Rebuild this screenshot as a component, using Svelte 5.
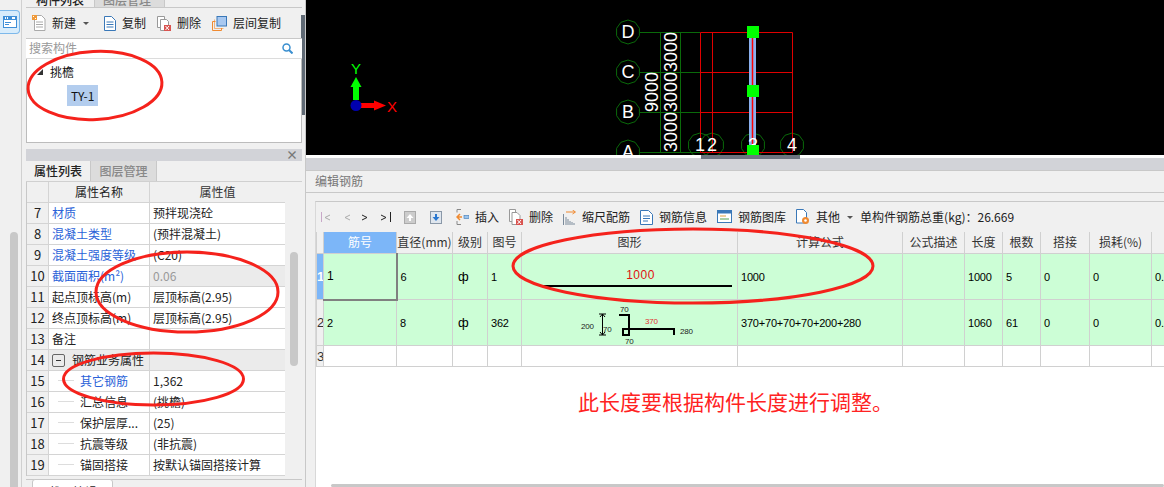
<script>
  const props = [
    { n: 7, name: '材质', val: '预拌现浇砼', link: true },
    { n: 8, name: '混凝土类型', val: '(预拌混凝土)', link: true },
    { n: 9, name: '混凝土强度等级', val: '(C20)', link: true },
    { n: 10, name: '截面面积(m²)', val: '0.06', link: true, off: true },
    { n: 11, name: '起点顶标高(m)', val: '层顶标高(2.95)' },
    { n: 12, name: '终点顶标高(m)', val: '层顶标高(2.95)' },
    { n: 13, name: '备注', val: '' },
    { n: 14, name: '钢筋业务属性', val: '', group: true },
    { n: 15, name: '其它钢筋', val: '1,362', link: true, child: true },
    { n: 16, name: '汇总信息', val: '(挑檐)', child: true },
    { n: 17, name: '保护层厚...', val: '(25)', child: true },
    { n: 18, name: '抗震等级', val: '(非抗震)', child: true },
    { n: 19, name: '锚固搭接', val: '按默认锚固搭接计算', child: true }
  ];
  const heads = ['筋号', '直径(mm)', '级别', '图号', '图形', '计算公式', '公式描述', '长度', '根数', '搭接', '损耗(%)', '单'];
  const widths = [7, 73, 56, 35, 34, 216, 165, 62, 38, 38, 49, 62, 40];
  const grids = [[628, 32, 'D'], [628, 72, 'C'], [628, 112, 'B'], [628, 152, 'A']];
  const axes = [[700, '1'], [712, '2'], [753, '3'], [792, '4']];
  const octagon = (x, y, r = 12) => Array.from({ length: 10 }, (_, i) => {
    const a = (i * Math.PI) / 5 + Math.PI / 10;
    return `${(x + r * Math.cos(a)).toFixed(1)},${(y + r * Math.sin(a)).toFixed(1)}`;
  }).join(' ');
</script>

<div class="app">
  <aside class="rail">
    <div class="rail-btn">
      <svg width="14" height="12" viewBox="0 0 14 12"><rect width="14" height="12" fill="#3f8fd8"/><rect x="1" y="4" width="12" height="7" fill="#fff"/><rect x="2" y="1" width="1" height="2" fill="#fff"/><rect x="4" y="1" width="1" height="2" fill="#fff"/><rect x="9" y="1" width="3" height="2" fill="#fff"/><rect x="2" y="6" width="6" height="1" fill="#3f8fd8"/><rect x="2" y="8" width="4" height="1" fill="#3f8fd8"/></svg>
    </div>
    <div class="rail-thumb"></div>
  </aside>

  <section class="side">
    <div class="cut-tabs">
      <span class="cut-tab on">构件列表</span>
      <span class="cut-tab">图层管理</span>
    </div>
    <div class="side-tools">
      <span class="tool t-new">
        <svg width="14" height="16" viewBox="0 0 14 16"><path d="M2.5.5h7l3.5 3.5v11.5h-10.500z" fill="#fff" stroke="#aaa"/><path d="M4 7h7M4 9.500h7M4 12h7" stroke="#aaa"/><rect width="5" height="5" fill="#f09a3a"/><path d="M1 1h1v1H1zM3 3h1v1H3z" fill="#fff"/></svg>
        新建<i class="caret"></i>
      </span>
      <span class="tool">
        <svg width="12" height="15" viewBox="0 0 12 15"><path d="M.5.500h7l4 4v10h-11z" fill="#fff" stroke="#3a78b8"/><path d="M2.500 6h7M2.500 8.500h7M2.500 11h7" stroke="#3a78b8"/></svg>
        复制
      </span>
      <span class="tool">
        <svg width="14" height="15" viewBox="0 0 14 15"><path d="M.5.500h7v11h-7z" fill="#fff" stroke="#999"/><path d="M3.500 3.500h6l2 2v9h-8z" fill="#fff" stroke="#999"/><rect x="7" y="9" width="7" height="6" fill="#d9534f"/><path d="M8.500 10l3.500 4M12 10l-3.500 4" stroke="#fff"/></svg>
        删除
      </span>
      <span class="tool">
        <svg width="15" height="15" viewBox="0 0 15 15"><path d="M3.500 5.500h-3v9h9v-2.500" fill="none" stroke="#f08a30"/><path d="M2.500 3.500v9h9" fill="none" stroke="#f08a30" opacity=".6"/><rect x="5" y=".5" width="9.500" height="9.500" fill="#a8c8f0" stroke="#3a78b8"/></svg>
        层间复制
      </span>
      <span class="more">
        <svg width="8" height="7" viewBox="0 0 8 7"><path d="M0 0l3.500 3.500L0 7zM4.500 0L8 3.500 4.500 7z" fill="#333"/></svg>
      </span>
    </div>
    <div class="search">
      <span>搜索构件</span>
      <svg width="11" height="11" viewBox="0 0 11 11"><circle cx="4.500" cy="4.500" r="3.500" fill="none" stroke="#3a8fd0" stroke-width="1.500"/><path d="M7 7l3.500 3.500" stroke="#3a8fd0" stroke-width="2"/></svg>
    </div>
    <div class="tree">
      <div class="tree-root"><i class="tri"></i>挑檐</div>
      <div class="tree-leaf"><span>TY-1</span></div>
    </div>

    <div class="pane-bar"><span class="close">×</span></div>
    <div class="tabs">
      <span class="tab on">属性列表</span>
      <span class="tab">图层管理</span>
    </div>
    <div class="props">
      <div class="props-head">
        <span class="c-num"></span><span class="c-name">属性名称</span><span class="c-val">属性值</span>
      </div>
      {#each props as p}
        <div class="prop" class:group={p.group} class:off={p.off}>
          <span class="c-num">{p.n}</span>
          <span class="c-name" class:link={p.link} class:child={p.child}>
            {#if p.group}<i class="minus"></i>{/if}
            {#if p.child}<i class="branch"></i>{/if}
            {p.name}
          </span>
          <span class="c-val">{p.val}</span>
        </div>
      {/each}
    </div>
    <div class="bottom-tabs"><span class="bottom-tab">截面编辑</span></div>
    <div class="props-thumb"></div>
  </section>

  <div class="splitter"></div>

  <main class="main">
    <div class="canvas">
      <svg class="cad" width="858" height="155" viewBox="306 0 858 155">
        <path d="M356 100V85" stroke="#0f0" stroke-width="6"/>
        <path d="M350.500 87L356 77l5.500 10z" fill="#0f0"/>
        <path d="M356 105.500h18" stroke="#f00" stroke-width="5"/>
        <path d="M374 100.500l12 5-12 5z" fill="#f00"/>
        <circle cx="356" cy="105.500" r="5.500" fill="#0000b0"/>
        <text x="356" y="74" class="axis" fill="#0f0">Y</text>
        <text x="392" y="112" class="axis" fill="#f00">X</text>

        <g fill="none" stroke="#0a6a0a">
          <path d="M640 32.500h60M640 72.500h60M640 112.500h60M640 152.500h60M660.500 32v121M680.500 32v121"/>
          {#each grids as g}<polygon points={octagon(g[0], g[1])}/>{/each}
          {#each axes as a}<polygon points={octagon(a[0], 145)}/>{/each}
        </g>
        <path d="M700.500 32.500h92v120h-92zM712.500 32v120M700 72.500h92M700 112.500h92" fill="none" stroke="#e00000"/>
        <rect x="749" y="32" width="7" height="118" fill="#8ab0ee"/>
        <path d="M752.500 32v118" stroke="#f00" stroke-width="1.500"/>

        <g class="labels" fill="#fff">
          {#each grids as g}<text x={g[0]} y={g[1] + 6}>{g[2]}</text>{/each}
          {#each axes as a}<text x={a[0]} y="151">{a[1]}</text>{/each}
        </g>
        <g class="dims" fill="#fff">
          <text transform="translate(677 72) rotate(-90)" textLength="40" lengthAdjust="spacingAndGlyphs">3000</text>
          <text transform="translate(677 112) rotate(-90)" textLength="40" lengthAdjust="spacingAndGlyphs">3000</text>
          <text transform="translate(677 152) rotate(-90)" textLength="40" lengthAdjust="spacingAndGlyphs">3000</text>
          <text transform="translate(658 112) rotate(-90)" textLength="40" lengthAdjust="spacingAndGlyphs">9000</text>
        </g>
        <g fill="#0f0">
          <rect x="747" y="26" width="12" height="12"/>
          <rect x="747" y="85" width="12" height="12"/>
          <rect x="747" y="145" width="12" height="11"/>
        </g>
      </svg>
    </div>
    <div class="canvas-foot"><span class="hscroll"></span></div>
    <div class="pane-bar wide"></div>
    <div class="title">编辑钢筋</div>
    <div class="editor">
      <div class="edit-tools">
        <span class="nav">
          <svg width="70" height="10" viewBox="0 0 70 10" class="nav-svg">
            <path d="M.5 0v10" stroke="#c8a8c8"/><path d="M9 3L4 5.500 9 8M29 3l-5 2.500 5 2.500" fill="none" stroke="#aaa"/>
            <path d="M41 3l5 2.500-5 2.500M60 3l5 2.500-5 2.500" fill="none" stroke="#222"/><path d="M69.500 0v10" stroke="#222"/>
          </svg>
        </span>
        <svg class="ico-up" width="12" height="13" viewBox="0 0 12 13"><rect x=".5" y=".5" width="11" height="12" fill="#ccc" stroke="#aaa"/><path d="M6 3L2.500 7H5v3h2V7h2.500z" fill="#fff"/></svg>
        <svg class="ico-down" width="12" height="13" viewBox="0 0 12 13"><rect x=".5" y=".5" width="11" height="12" fill="#dfe6ee" stroke="#8a98a8"/><path d="M6 10l3.500-4H7V3H5v3H2.500z" fill="#2a78d0"/></svg>
        <span class="tool i-ins">
          <svg width="13" height="16" viewBox="0 0 13 16"><path d="M5 .5H1v3M1 12v3.500h4" fill="none" stroke="#888"/><path d="M6 8H1.500M4 5L1 8l3 3" fill="none" stroke="#f08a30" stroke-width="1.500"/><rect x="8" y="6.500" width="5" height="3" fill="#9cc4ec" stroke="#3a78b8" stroke-width=".6"/></svg>
          插入
        </span>
        <span class="tool">
          <svg width="14" height="16" viewBox="0 0 14 16"><path d="M.5.500h6v12h-6z" fill="#fff" stroke="#999"/><path d="M3 3.500h5l3 3v9H3z" fill="#fff" stroke="#999"/><rect x="7" y="10" width="7" height="6" fill="#d9534f"/><path d="M8.500 11l3.500 4M12 11l-3.500 4" stroke="#fff"/></svg>
          删除
        </span>
        <span class="tool">
          <svg width="13" height="15" viewBox="0 0 13 15"><path d="M.5 4v11M3 7v8M5 9v6M7 11v4M9 12v3M11 13v2" stroke="#7a8a9a"/><path d="M3 2h9M9.500 0l3 2-3 2" fill="none" stroke="#f08a30"/></svg>
          缩尺配筋
        </span>
        <span class="tool">
          <svg width="13" height="15" viewBox="0 0 13 15"><path d="M.5.500h8l4 4v10H.5z" fill="#fff" stroke="#3a78b8"/><path d="M3 6h7M3 8.500h7M3 11h5" stroke="#3a78b8"/></svg>
          钢筋信息
        </span>
        <span class="tool">
          <svg width="15" height="13" viewBox="0 0 15 13"><rect x=".5" y=".5" width="14" height="12" fill="#fff" stroke="#3a78b8"/><rect x="1" y="1" width="13" height="2.500" fill="#3a78b8"/><path d="M3 6h6" stroke="#e0a040"/><path d="M3 9h9" stroke="#50a050"/></svg>
          钢筋图库
        </span>
        <span class="tool">
          <svg width="14" height="16" viewBox="0 0 14 16"><path d="M.5.500h7l3 3V14H.5z" fill="#fff" stroke="#3a78b8"/><circle cx="9.500" cy="11.500" r="3.500" fill="#f08a30"/><circle cx="9.500" cy="11.500" r="1.300" fill="#fff"/></svg>
          其他<i class="caret"></i>
        </span>
        <span class="total">单构件钢筋总重(kg)：26.669</span>
      </div>

      <table class="bars">
        <colgroup>{#each widths as w}<col style="width: {w}px" />{/each}</colgroup>
        <thead>
          <tr>
            <th></th>
            {#each heads as h, i}<th class:active={i === 0}>{h}</th>{/each}
          </tr>
        </thead>
        <tbody>
          <tr class="green">
            <td class="rowno cur">1</td>
            <td class="selected">1</td><td>6</td><td class="grade">ф</td><td>1</td>
            <td class="shape">
              <div class="len-label">1000</div>
              <div class="len-line"></div>
            </td>
            <td>1000</td><td></td><td>1000</td><td>5</td><td>0</td><td>0</td><td>0.</td>
          </tr>
          <tr class="green">
            <td class="rowno">2</td>
            <td>2</td><td>8</td><td class="grade">ф</td><td>362</td>
            <td class="shape">
              <svg class="fig" width="215" height="45" viewBox="521 300 215 45">
                <path d="M601.500 314v21M598 314h7M598 335h7M599 317l2.500-3 2.500 3M599 332l2.500 3 2.500-3" fill="none" stroke="#000"/>
                <path d="M618 315h10v20h-6v-6h51v6" fill="none" stroke="#000" stroke-width="2"/>
                <text x="580" y="329">200</text><text x="602" y="332">70</text>
                <text x="619" y="312">70</text><text x="644" y="324" fill="#e03030">370</text>
                <text x="679" y="334">280</text><text x="624" y="344">70</text>
              </svg>
            </td>
            <td>370+70+70+70+200+280</td><td></td><td>1060</td><td>61</td><td>0</td><td>0</td><td>0.</td>
          </tr>
          <tr class="blank">
            <td class="rowno">3</td>
            <td></td><td></td><td></td><td></td><td></td><td></td><td></td><td></td><td></td><td></td><td></td><td></td>
          </tr>
        </tbody>
      </table>

      <p class="note">此长度要根据构件长度进行调整。</p>
    </div>
    <div class="bottom-scroll"></div>
  </main>

  <svg class="marks" width="1164" height="487" viewBox="0 0 1164 487">
    <g fill="none" stroke="#f5221c" stroke-width="3">
      <ellipse cx="95" cy="85.500" rx="67" ry="34" transform="rotate(-3 95 85.500)"/>
      <ellipse cx="187" cy="292" rx="91" ry="40"/>
      <ellipse cx="153.500" cy="379" rx="90" ry="26"/>
      <ellipse cx="693" cy="266" rx="180" ry="37"/>
    </g>
  </svg>
</div>

<style>
  :global(body) { margin: 0; background: #f0f0f0; }
  .app {
    position: relative;
    display: flex;
    width: 1164px;
    height: 487px;
    overflow: hidden;
    font: 12px/1.2 "Noto Sans CJK SC", "Liberation Sans", sans-serif;
    color: #222;
    background: #f0f0f0;
  }

  .rail {
    position: relative;
    flex: 0 0 22px;
    width: 22px;
    border-right: 1px solid #d0d0d0;
    box-sizing: border-box;
  }
  .rail-btn {
    display: flex;
    align-items: center;
    justify-content: center;
    width: 20px;
    height: 24px;
    margin-top: 10px;
    background: #d8ecfb;
    border: 1px solid #7db8ea;
    border-left: 0;
    border-radius: 0 4px 4px 0;
    box-sizing: border-box;
  }
  .rail-thumb {
    position: absolute;
    left: 10px;
    top: 232px;
    bottom: 0;
    width: 8px;
    border-radius: 4px 4px 0 0;
    background: #c8c8c8;
  }

  .side {
    position: relative;
    flex: 0 0 276px;
    min-width: 0;
    margin-left: 4px;
    display: flex;
    flex-direction: column;
  }
  .side > * { flex: none; }
  .cut-tabs { display: flex; height: 8px; overflow: hidden; border-bottom: 1px solid #c8c8c8; box-sizing: border-box; }
  .cut-tab { height: 7px; padding: 0 10px; line-height: 0; font-weight: 500; border-right: 1px solid #c8c8c8; width: 48px; }
  .cut-tab:not(.on) { background: #dcdcdc; color: #888; width: 55px; padding: 0 6px 0 8px; }
  .cut-tab.on { background: #f0f0f0; }

  .side-tools { display: flex; align-items: center; height: 30px; padding-left: 6px; border-bottom: 1px solid #c8c8c8; }
  .tool { display: inline-flex; align-items: center; gap: 6px; white-space: nowrap; }
  .side-tools .tool { margin-right: 11px; }
  .side-tools .t-new { margin-right: 15px; }
  .more { margin-left: 14px; display: flex; }
  .caret { display: inline-block; margin-left: 1px; border: 3px solid transparent; border-top: 3px solid #555; border-bottom: 0; }

  .search {
    display: flex;
    align-items: center;
    justify-content: space-between;
    height: 19px;
    padding: 0 9px 0 3px;
    background: #fff;
    color: #999;
    border-bottom: 1px solid #dcdcdc;
  }
  .tree {
    height: 84px;
    background: #fff;
    border: 1px solid #bcbcbc;
    border-top: 0;
    box-sizing: border-box;
    padding-top: 4px;
    color: #111;
  }
  .tree-root { display: flex; align-items: center; height: 18px; padding-left: 10px; }
  .tri { width: 0; height: 0; margin-right: 7px; border-left: 6px solid transparent; border-bottom: 6px solid #333; }
  .tree-leaf { margin: 4px 0 0 40px; }
  .tree-leaf span { display: inline-block; height: 21px; line-height: 21px; padding: 0 4px; background: #b3cdee; }

  .pane-bar { height: 12px; margin-top: 6px; background: #d2d3d8; display: flex; justify-content: flex-end; align-items: center; }
  .close { color: #777; font-size: 12px; line-height: 12px; padding-right: 4px; font-weight: 700; }
  .tabs { display: flex; height: 21px; border-bottom: 1px solid #d0d0d0; box-sizing: border-box; }
  .tab { width: 64px; display: flex; align-items: center; justify-content: center; font-weight: 500; border-right: 1px solid #c8c8c8; }
  .tab:not(.on) { background: #dcdcdc; color: #888; width: 65px; }

  .props { width: 259px; background: #fff; border-left: 1px solid #c8c8c8; box-sizing: border-box; }
  .props-head, .prop { display: flex; height: 21px; line-height: 20px; box-sizing: border-box; border-bottom: 1px solid #d4d4d4; }
  .props-head { background: #f0f0f0; text-align: center; }
  .props-head .c-val { padding: 0; color: #333; }
  .props-head .c-name { justify-content: center; padding: 0; }
  .c-num { flex: 0 0 21px; text-align: center; background: #f0f0f0; border-right: 1px solid #d4d4d4; font-size: 13px; }
  .c-name {
    flex: 0 0 101px;
    display: flex;
    align-items: center;
    padding-left: 3px;
    box-sizing: border-box;
    border-right: 1px solid #d4d4d4;
    white-space: nowrap;
  }
  .c-val { flex: 1; padding-left: 3px; white-space: nowrap; }
  .link { color: #2a62d8; }
  .child { padding-left: 31px; position: relative; }
  .branch { position: absolute; left: 9px; top: 9px; width: 16px; border-top: 1px solid #ddd; }
  .minus { width: 11px; height: 11px; margin-right: 7px; border: 1px solid #666; border-radius: 2px; position: relative; flex: none; }
  .minus::after { content: ""; position: absolute; left: 3px; top: 5px; width: 5px; border-top: 1px solid #333; }
  .group .c-name, .group .c-val { background: #ebebeb; }
  .off .c-val { background: #ebebeb; color: #999; }
  .props-thumb { position: absolute; left: 264px; top: 252px; width: 8px; height: 114px; border-radius: 4px; background: #c8c8c8; }

  .bottom-tabs { margin-top: 3px; padding-left: 6px; border-top: 1px solid #c8c8c8; }
  .bottom-tab { display: block; width: 79px; height: 12px; margin-top: -1px; padding-top: 5px; text-align: center; background: #fff; border: 1px solid #c8c8c8; border-radius: 3px 3px 0 0; }

  .splitter { flex: 0 0 4px; margin-left: -1px; background: linear-gradient(#f0f0f0 15px, #5f6974 15px, #5f6974 115px, #f0f0f0 115px); }

  .main { flex: 1; min-width: 0; display: flex; flex-direction: column; border-left: 1px solid #c8c8c8; position: relative; }
  .canvas { height: 155px; background: #000; flex: none; overflow: hidden; }
  .cad { display: block; }
  .axis { font: 15px "Liberation Sans", sans-serif; text-anchor: middle; }
  .labels { font: 18px "Liberation Sans", sans-serif; text-anchor: middle; }
  .dims { font: 18px "Liberation Sans", sans-serif; }
  .canvas-foot { height: 3px; flex: none; background: #fff; position: relative; }
  .hscroll { position: absolute; left: 395px; width: 99px; height: 4px; background: #6d7580; }
  .main .pane-bar { margin: 0; flex: none; }
  .title { height: 21px; line-height: 20px; padding-left: 9px; flex: none; color: #777; border-top: 1px solid #c8c8c8; border-bottom: 1px solid #c8c8c8; }

  .editor { flex: 1; margin: 8px 0 0 9px; background: #fff; border-top: 1px solid #c8c8c8; border-left: 1px solid #d8d8d8; }
  .edit-tools { display: flex; align-items: center; height: 30px; background: #f0f0f0; padding-left: 5px; }
  .nav { margin-right: 13px; display: flex; }
  .ico-up { margin-right: 14px; flex: none; }
  .ico-down { margin-right: 14px; flex: none; }
  .edit-tools .tool { margin-right: 10px; }
  .total { margin-left: -3px; white-space: nowrap; }

  .bars { border-collapse: collapse; table-layout: fixed; width: 848px; }
  .bars th { height: 21px; padding: 0; background: #f0f0f0; font-weight: 400; color: #333; border: 1px solid #d0d0d0; border-top: 0; white-space: nowrap; overflow: hidden; }
  .bars th.active { background: #7cb6f8; color: #fff; }
  .bars td { height: 46px; padding: 0 0 0 3px; border: 1px solid #d0d0d0; font: 11px "Liberation Sans", sans-serif; letter-spacing: -.2px; color: #000; box-sizing: border-box; overflow: hidden; white-space: nowrap; }
  .green td { background: #ccfed6; }
  .bars td.rowno { padding: 0; background: #f0f0f0; font: 13px "Liberation Sans", sans-serif; color: #333; }
  .bars td.cur { background: #7cb6f8; color: #fff; font-weight: 700; }
  .bars td.selected { border: 1px solid #d0d0d0; border-right: 2px solid #808080; border-bottom: 2px solid #808080; font-size: 12px; }
  .bars td.grade { padding-left: 5px; font-size: 13px; }
  .bars td.shape { padding: 0; }
  .len-label { text-align: center; color: #e01010; font-size: 12px; letter-spacing: .5px; height: 15px; margin-top: 2px; padding-left: 22px; }
  .len-line { height: 2px; margin: 2px 5px 0 18px; background: #000; }
  .fig { display: block; }
  .fig text { font: 8px "Liberation Sans", sans-serif; fill: #222; }
  .fig text[fill] { fill: #e03030; }
  .blank td { height: 21px; background: #fff; }

  .note { margin: 20px 0 0 0; padding-left: 262px; font-size: 21px; line-height: 28px; color: #f22; white-space: nowrap; }
  .bottom-scroll { position: absolute; left: 25px; right: 0; bottom: 0; height: 3px; background: #c8c8c8; border-radius: 2px; }

  .marks { position: absolute; left: 0; top: 0; pointer-events: none; }
</style>
